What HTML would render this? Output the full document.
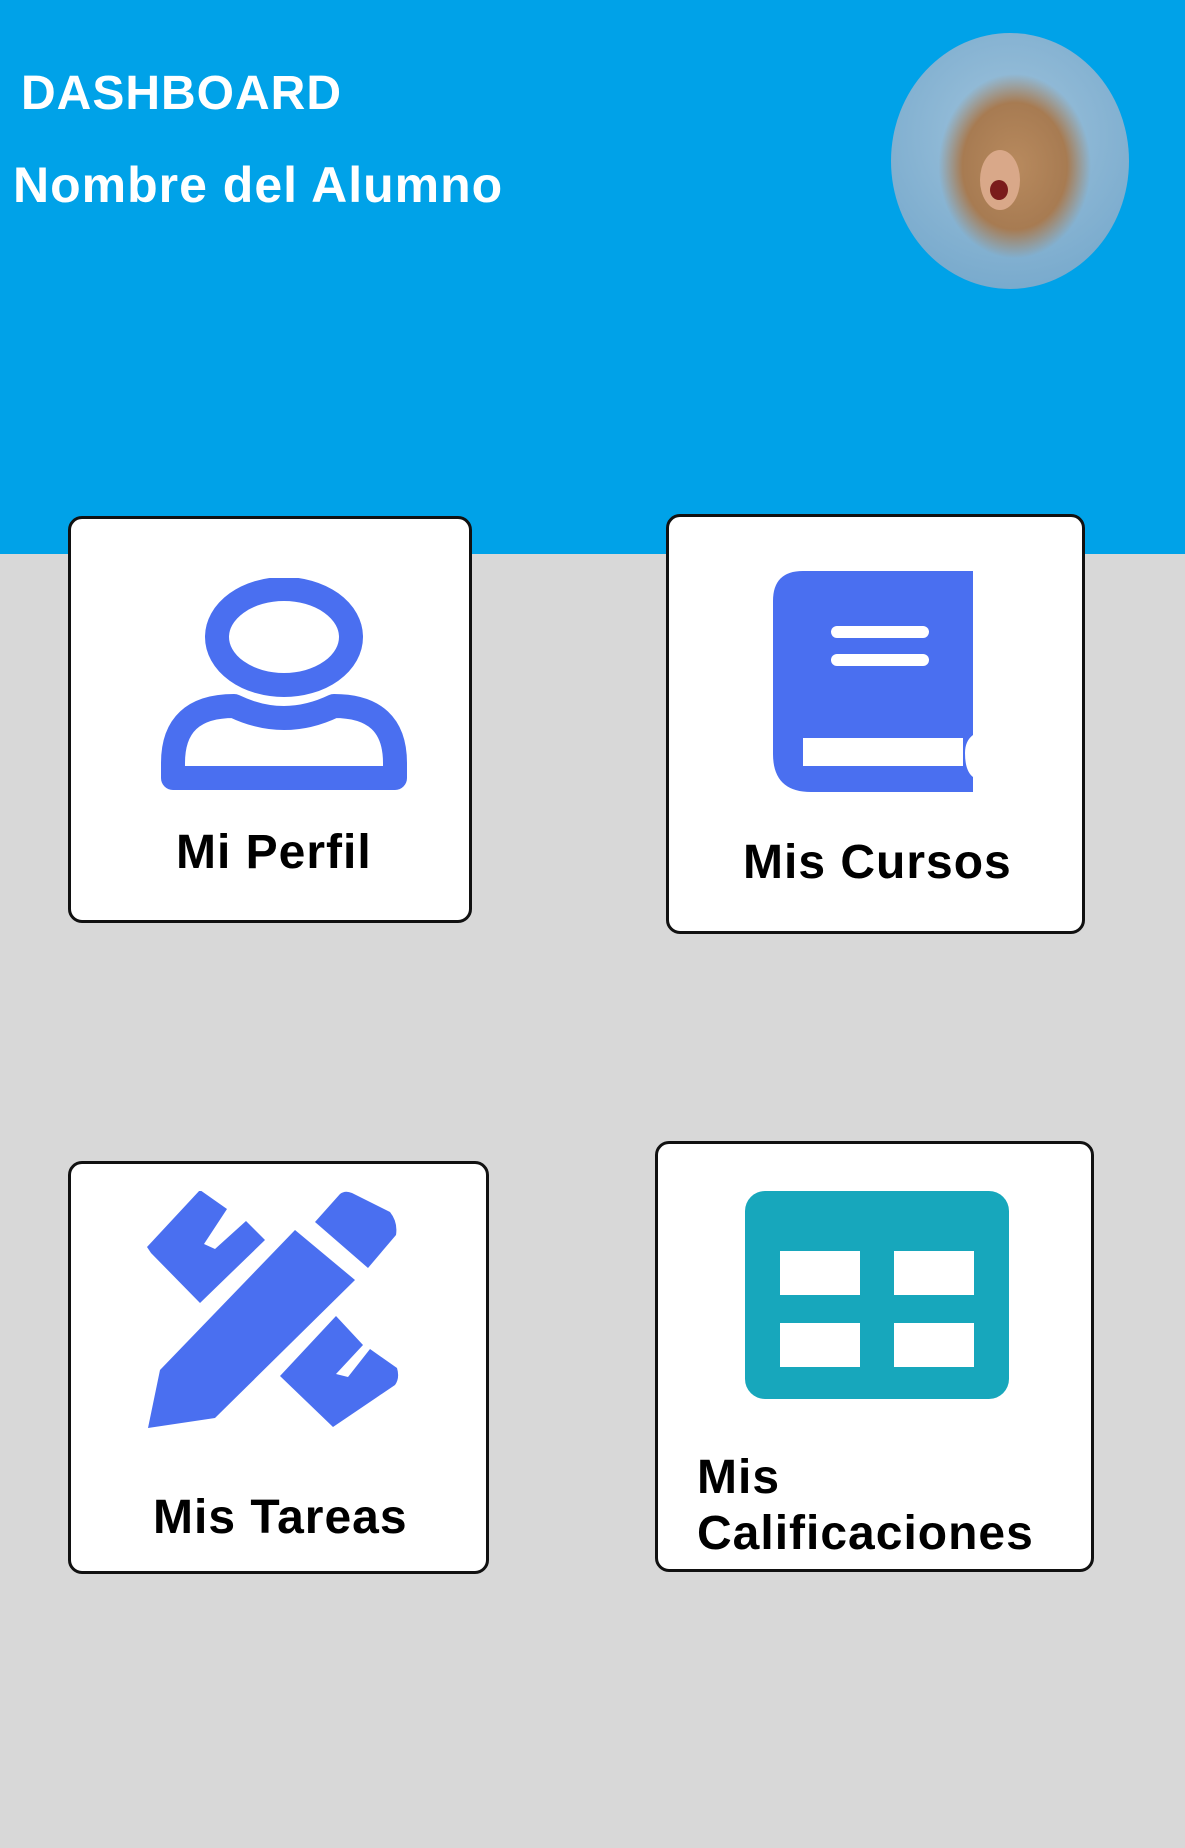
<!DOCTYPE html>
<html><head><meta charset="utf-8"><style>
body{margin:0;width:1185px;height:1848px;background:#d8d8d8;position:relative;overflow:hidden;font-family:"Liberation Sans",Arial,sans-serif;font-weight:bold}
.hdr{position:absolute;left:0;top:0;width:1185px;height:554px;background:#00a2e8}
.t{position:absolute;white-space:nowrap;line-height:1}
.l{font-size:48px;letter-spacing:1px;color:#000}
.card{position:absolute;background:#fff;border:3px solid #111;border-radius:14px;box-sizing:border-box}
svg{position:absolute}
</style></head><body>
<div class="hdr"></div>
<div class="t" style="left:21px;top:70px;font-size:48px;color:#fff;letter-spacing:1px">DASHBOARD</div>
<div class="t" style="left:13px;top:160px;font-size:50px;color:#fff;letter-spacing:1px">Nombre del Alumno</div>
<div style="position:absolute;left:891px;top:33px;width:238px;height:256px;border-radius:50%;background:radial-gradient(ellipse 40% 45% at 52% 52%,#b88a5e 0,#a77b52 55%,transparent 80%),radial-gradient(circle at 50% 40%,#9fc3dc,#6fa4c9);"></div>
<div style="position:absolute;left:980px;top:150px;width:40px;height:60px;border-radius:50%;background:#d9a889"></div>
<div style="position:absolute;left:990px;top:180px;width:18px;height:20px;border-radius:50%;background:#7a1b1b"></div>

<div class="card" style="left:68px;top:516px;width:404px;height:407px"></div>
<svg style="left:159px;top:578px" width="250" height="212" viewBox="0 0 250 212">
<ellipse cx="125" cy="59" rx="67" ry="48" fill="none" stroke="#4a6ff0" stroke-width="24"/>
<path d="M14 200 V185 Q14 128 75 128 Q100 140 125 140 Q150 140 175 128 Q236 128 236 185 V200 Z" fill="none" stroke="#4a6ff0" stroke-width="24" stroke-linejoin="round"/>
</svg>
<div class="t l" style="left:176px;top:829px">Mi Perfil</div>

<div class="card" style="left:666px;top:514px;width:419px;height:420px"></div>
<svg style="left:773px;top:571px" width="200" height="221" viewBox="0 0 200 221">
<path d="M30 0 H200 V164 Q192 170 192 182 Q192 200 200 206 V221 H38 Q0 221 0 183 V30 Q0 0 30 0 Z" fill="#4a6ff0"/>
<rect x="30" y="167" width="160" height="28" fill="#fff"/>
<rect x="58" y="55" width="98" height="12" rx="6" fill="#fff"/>
<rect x="58" y="83" width="98" height="12" rx="6" fill="#fff"/>
</svg>
<div class="t l" style="left:743px;top:839px">Mis Cursos</div>

<div class="card" style="left:68px;top:1161px;width:421px;height:413px"></div>
<svg style="left:136px;top:1191px" width="272" height="238" viewBox="136 1191 272 238">
<path d="M148 1428 L160 1370 L295 1230 L355 1280 L215 1418 Z" fill="#4a6ff0"/>
<path d="M315 1222 L340 1194 Q345 1190 352 1193 L390 1212 Q398 1222 396 1235 L368 1268 Z" fill="#4a6ff0"/>
<path d="M147 1247 L200 1190 L227 1209 L204 1244 L215 1249 L246 1221 L265 1240 L200 1303 L151 1253 Z" fill="#4a6ff0"/>
<path d="M280 1376 L336 1316 L363 1345 L336 1374 L348 1377 L370 1349 L397 1368 Q400 1378 395 1385 L333 1427 Z" fill="#4a6ff0"/>
</svg>
<div class="t l" style="left:153px;top:1494px">Mis Tareas</div>

<div class="card" style="left:655px;top:1141px;width:439px;height:431px"></div>
<svg style="left:745px;top:1191px" width="264" height="208" viewBox="0 0 264 208">
<rect x="0" y="0" width="264" height="208" rx="20" fill="#17a7bc"/>
<rect x="35" y="60" width="80" height="44" fill="#fff"/>
<rect x="149" y="60" width="80" height="44" fill="#fff"/>
<rect x="35" y="132" width="80" height="44" fill="#fff"/>
<rect x="149" y="132" width="80" height="44" fill="#fff"/>
</svg>
<div class="t l" style="left:697px;top:1454px">Mis</div>
<div class="t l" style="left:697px;top:1510px">Calificaciones</div>
</body></html>
